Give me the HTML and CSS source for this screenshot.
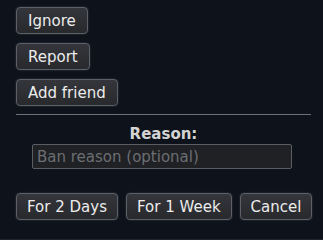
FILE: index.html
```html
<!DOCTYPE html>
<html>
<head>
<meta charset="utf-8">
<link rel="stylesheet" href="styles.css">
</head>
<body>
<div class="panel">
  <div class="actions">
    <button class="btn">Ignore</button>
    <button class="btn">Report</button>
    <button class="btn">Add friend</button>
  </div>
  <div class="sep"></div>
  <div class="label">Reason:</div>
  <div class="field-row">
    <input class="field" type="text" placeholder="Ban reason (optional)">
  </div>
  <div class="ban-row">
    <button class="btn">For 2 Days</button>
    <button class="btn">For 1 Week</button>
    <button class="btn">Cancel</button>
  </div>
</div>
</body>
</html>
```
FILE: styles.css
```css
html, body {
  margin: 0;
  padding: 0;
  background: #0e131b;
  height: 100%;
}
body {
  font-family: "DejaVu Sans", Verdana, sans-serif;
  font-size: 15px;
  color: #e6e6e6;
  box-sizing: border-box;
  border-bottom: 1px solid #1f252d;
}
.panel {
  padding: 7px 12px 0 16px;
  display: flex;
  flex-direction: column;
}
.actions {
  display: flex;
  flex-direction: column;
  align-items: flex-start;
  gap: 9px;
}
.btn {
  font-family: "DejaVu Sans", Verdana, sans-serif;
  font-size: 15px;
  line-height: 17px;
  height: 27px;
  padding: 5px 11px 3px;
  color: #ececec;
  background: linear-gradient(#34363b, #27292d);
  border: 1px solid #5c6068;
  border-radius: 4px;
  box-shadow: 0 0 2px rgba(150, 155, 165, 0.35);
  box-sizing: border-box;
  margin: 0;
  white-space: nowrap;
  flex-shrink: 0;
}
.sep {
  height: 1px;
  background: #6b7078;
  margin-top: 8px;
}
.label {
  margin-top: 10px;
  text-align: center;
  font-weight: bold;
  line-height: 18px;
  color: #d4d4d4;
}
.field-row {
  display: flex;
  justify-content: center;
  margin-top: 1px;
  padding-right: 3px;
}
.field {
  width: 260px;
  height: 25px;
  box-sizing: border-box;
  background: #1f2125;
  border: 1px solid #5a5e64;
  border-radius: 2px;
  padding: 0 4px;
  font-family: "DejaVu Sans", Verdana, sans-serif;
  font-size: 15px;
  color: #d0d0d0;
  margin: 0;
}
.field::placeholder {
  color: #6c6e72;
}
.ban-row {
  display: flex;
  gap: 8px;
  margin-top: 24px;
}
.ban-row .btn {
  padding-left: 10px;
  padding-right: 10px;
}
```
